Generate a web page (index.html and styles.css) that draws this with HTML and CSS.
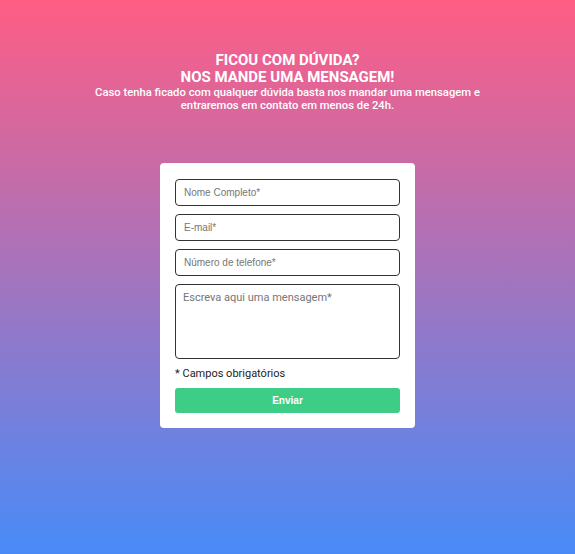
FILE: index.html
```html
<!DOCTYPE html>
<html lang="pt-BR">
<head>
<meta charset="utf-8">
<title>Contato</title>
<link rel="stylesheet" href="styles.css">
</head>
<body>
<main class="page">
  <header class="intro">
    <h1 class="intro-title">Ficou com dúvida?<br>Nos mande uma mensagem!</h1>
    <p class="intro-text">Caso tenha ficado com qualquer dúvida basta nos mandar uma mensagem e entraremos em contato em menos de 24h.</p>
  </header>
  <form class="card">
    <input class="field" type="text" placeholder="Nome Completo*">
    <input class="field" type="email" placeholder="E-mail*">
    <input class="field" type="tel" placeholder="Número de telefone*">
    <textarea class="field field-area" placeholder="Escreva aqui uma mensagem*"></textarea>
    <p class="note">* Campos obrigatórios</p>
    <button class="submit" type="button">Enviar</button>
  </form>
</main>
</body>
</html>
```
FILE: styles.css
```css
* { box-sizing: border-box; }
html, body { margin: 0; padding: 0; }
body {
  font-family: Roboto, "Liberation Sans", sans-serif;
  min-height: 554px;
  background: linear-gradient(180deg, #ff5d84 0%, #488bf8 100%);
}
.page {
  display: flex;
  flex-direction: column;
  align-items: center;
  padding-top: 52px;
  min-height: 554px;
}
.intro { text-align: center; color: #fff; width: 420px; }
.intro-title {
  margin: 0;
  font-size: 15px;
  line-height: 17px;
  font-weight: 700;
  text-transform: uppercase;
}
.intro-text {
  margin: 0;
  font-size: 11.25px;
  line-height: 13px;
  font-weight: 500;
}
.card {
  margin-top: 51px;
  width: 255px;
  background: #fff;
  border-radius: 4px;
  padding: 16px 15px 15px;
  display: flex;
  flex-direction: column;
  gap: 8px;
}
.field {
  width: 100%;
  height: 27px;
  border: 1px solid #333;
  border-radius: 4px;
  padding: 0 8px;
  font-family: "Liberation Sans", Arial, sans-serif;
  font-size: 10px;
  color: #333;
  background: #fff;
}
.field::placeholder { color: #767676; }
.field-area {
  height: 75px;
  padding: 6px 7px;
  resize: none;
  font-family: Roboto, "Liberation Sans", sans-serif;
  font-size: 11px;
  display: block;
}
.note {
  margin: 0;
  font-size: 11px;
  line-height: 13px;
  color: #222;
}
.submit {
  height: 25px;
  border: none;
  border-radius: 3px;
  background: #3dcd87;
  color: #fff;
  font-family: "Liberation Sans", Arial, sans-serif;
  font-weight: 700;
  font-size: 10px;
}
```
